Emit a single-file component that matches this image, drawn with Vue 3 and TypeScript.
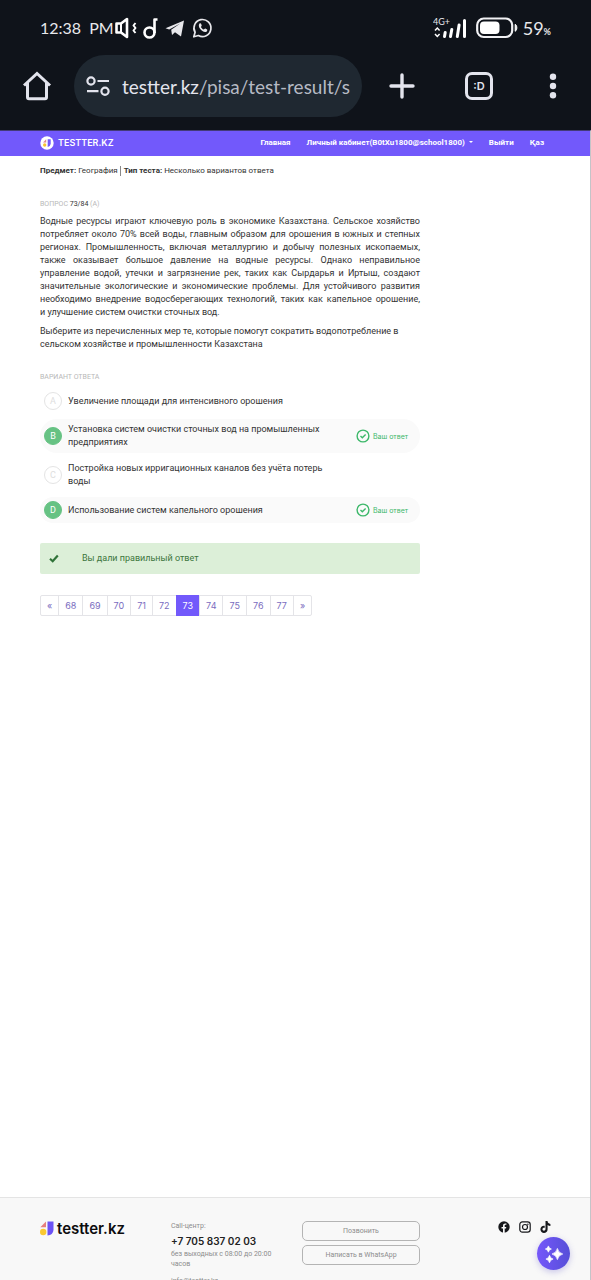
<script setup lang="ts">
interface Answer {
  letter: string
  text: string
  chosen: boolean
}

const answers: Answer[] = [
  { letter: 'A', text: 'Увеличение площади для интенсивного орошения', chosen: false },
  { letter: 'B', text: 'Установка систем очистки сточных вод на промышленных предприятиях', chosen: true },
  { letter: 'C', text: 'Постройка новых ирригационных каналов без учёта потерь воды', chosen: false },
  { letter: 'D', text: 'Использование систем капельного орошения', chosen: true },
]

const pages: string[] = ['«', '68', '69', '70', '71', '72', '73', '74', '75', '76', '77', '»']
const currentPage = '73'
</script>

<template>
  <div class="screen">
    <div class="status">
      <span class="clock"><span>12:38</span><span>PM</span></span>
      <svg class="status-icons" width="99" height="24" viewBox="0 0 99 24" aria-hidden="true">
        <g fill="none" stroke="#fff" stroke-width="2.6" stroke-linejoin="round">
          <path d="M2.500 7.500h4.500l6-4.500v18l-6-4.500h-4.500z" />
          <path d="M7 7v10" stroke-width="2" />
          <path d="M21.500 7l-2 2.500 2 2.500-2 2.500 2 2.500" stroke-width="2" />
          <circle cx="35.500" cy="16.500" r="5" />
          <path d="M40.500 17V3.500h3" />
        </g>
        <path d="M51.500 12.200 70 4.500l-3 16-6-4.300-3 2.800-.8-5.200 9-6.300-11 6z" fill="#e8e8ec" />
        <path d="M79.800 20.800l1.300-4.500a8.500 8.500 0 1 1 3.300 3.200z" fill="none" stroke="#e8e8ec" stroke-width="1.700" stroke-linejoin="round" />
        <path d="M85.500 7.500c.8-.6 1.500-.2 1.700.5l.5 1.400c.1.600-.7 1-.8 1.500.6 1.200 1.600 2.100 2.900 2.600.5-.1.900-1.200 1.500-1l1.800.9c.5.400 0 2-.8 2.400-3.600 1.400-9.500-5-6.800-8.300z" fill="#e8e8ec" />
      </svg>
      <span class="spacer"></span>
      <svg class="signal" width="35" height="24" viewBox="0 0 35 24" aria-label="4G+">
        <text x="0" y="9" class="signal-text">4G+</text>
        <path d="M2 14.500 4.300 12l2.300 2.500M2 18l2.300 2.500L6.600 18" fill="none" stroke="#fff" stroke-width="1.500" />
        <path d="M11.500 20.500l.7-4M17.500 20.500l1.300-7M24.300 20.500l1.800-11.500M31.500 20.500V4.500" fill="none" stroke="#fff" stroke-width="3" stroke-linecap="round" />
      </svg>
      <svg class="battery" width="42" height="22" viewBox="0 0 42 22" aria-hidden="true">
        <rect x="1.200" y="1.500" width="35" height="18.500" rx="6.500" fill="none" stroke="#f1f1f4" stroke-width="2.200" />
        <rect x="4" y="4.500" width="19.500" height="12.500" rx="4" fill="#fff" />
        <path d="M39.200 7.300c2.200 1.300 2.200 5.700 0 7z" fill="#fff" stroke="#fff" />
      </svg>
      <span class="percent">59<small>%</small></span>
    </div>

    <div class="toolbar">
      <button class="tool" type="button" aria-label="Home">
        <svg width="30" height="30" viewBox="0 0 30 30"><path d="M2 14.500 15 2.500l13 12M5.500 12v14.300q0 1.500 1.500 1.500h16q1.500 0 1.500-1.500V12" fill="none" stroke="#e3e4ed" stroke-width="3" stroke-linejoin="miter" /></svg>
      </button>
      <button class="address" type="button">
        <svg width="24" height="20" viewBox="0 0 24 20" aria-hidden="true">
          <g fill="none" stroke="#e3e4ed" stroke-width="2.200">
            <circle cx="5" cy="5" r="3.600" /><path d="M11.500 5H23M1 15.200h11.500" /><circle cx="19" cy="15.200" r="3.600" />
          </g>
        </svg>
        <span class="url"><b>testter.kz</b>/pisa/test-result/s</span>
      </button>
      <button class="tool plus" type="button" aria-label="New tab">
        <svg width="26" height="26" viewBox="0 0 26 26"><path d="M13 2v22M2 13h22" stroke="#e3e4ed" stroke-width="3.400" stroke-linecap="round" /></svg>
      </button>
      <button class="tabs" type="button">:D</button>
      <button class="tool" type="button" aria-label="Menu">
        <svg width="8" height="26" viewBox="0 0 8 26" fill="#e3e4ed"><circle cx="4" cy="3.800" r="3.200" /><circle cx="4" cy="13" r="3.200" /><circle cx="4" cy="22.200" r="3.200" /></svg>
      </button>
    </div>

    <div class="site">
      <header class="navbar">
        <a class="brand" href="#">
          <svg width="14" height="14" viewBox="0 0 14 14" aria-hidden="true">
            <circle cx="7" cy="7" r="6.700" fill="#fff" />
            <path d="M3 6.500 6.200 3.300v3.200z" fill="#e0868a" /><circle cx="4.700" cy="9" r="1.700" fill="#f5c431" /><path d="M7.700 3.300h3v4.500q-.2 2.500-3 3.200z" fill="#7259fb" />
          </svg>
          TESTTER.KZ
        </a>
        <nav class="links">
          <a href="#">Главная</a>
          <a href="#">Личный кабинет(B0tXu1800@school1800) <i class="caret"></i></a>
          <a href="#">Выйти</a>
          <a href="#">Қаз</a>
        </nav>
      </header>

      <main class="content">
        <p class="subject"><b>Предмет:</b> География <i class="bar"></i> <b>Тип теста:</b> Несколько вариантов ответа</p>
        <div class="columns">
          <section class="question">
            <h1 class="label">Вопрос <span>73/84</span> (A)</h1>
            <p class="passage">Водные ресурсы играют ключевую роль в экономике Казахстана. Сельское хозяйство потребляет около 70% всей воды, главным образом для орошения в южных и степных регионах. Промышленность, включая металлургию и добычу полезных ископаемых, также оказывает большое давление на водные ресурсы. Однако неправильное управление водой, утечки и загрязнение рек, таких как Сырдарья и Иртыш, создают значительные экологические и экономические проблемы. Для устойчивого развития необходимо внедрение водосберегающих технологий, таких как капельное орошение, и&nbsp;улучшение систем очистки сточных вод.</p>
            <p class="task">Выберите из перечисленных мер те, которые помогут сократить водопотребление в сельском хозяйстве и промышленности Казахстана</p>
            <h2 class="label second">Вариант ответа</h2>
            <ul class="answers">
              <li v-for="a in answers" :key="a.letter" class="answer" :class="{ chosen: a.chosen }">
                <span class="letter">{{ a.letter }}</span>
                <span class="answer-text">{{ a.text }}</span>
                <span v-if="a.chosen" class="mark">
                  <svg width="14" height="14" viewBox="0 0 14 14" aria-hidden="true"><g fill="none" stroke="#3db86a"><circle cx="7" cy="7" r="5.900" stroke-width="1.400" /><path d="M4.500 7.100 6.300 8.800 9.600 5.500" stroke-width="1.400" /></g></svg>
                  Ваш ответ
                </span>
              </li>
            </ul>
            <div class="alert">
              <svg width="10" height="9" viewBox="0 0 10 9" aria-hidden="true"><path d="M1 4.800 3.700 7.200 8.800 1.600" fill="none" stroke="#2f7238" stroke-width="2.200" /></svg>
              Вы дали правильный ответ
            </div>
            <nav class="pager">
              <a v-for="p in pages" :key="p" href="#" :class="{ active: p === currentPage }">{{ p }}</a>
            </nav>
          </section>
        </div>
      </main>

      <footer class="footer">
        <a class="footer-brand" href="#">
          <svg width="14" height="15" viewBox="0 0 14 15" aria-hidden="true">
            <path d="M.3 6.200 6 .500v5.700z" fill="#e5807f" /><circle cx="3.200" cy="11" r="3.200" fill="#fac832" /><path d="M7.500.500h6V9q-.5 5-6 5.500z" fill="#6c52f5" />
          </svg>
          testter.kz
        </a>
        <div class="contacts">
          <p>Call-центр:</p>
          <a class="phone" href="tel:+77058370203">+7 705 837 02 03</a>
          <p>без выходных с 08:00 до 20:00 часов</p>
          <a class="mail" href="mailto:info@testter.kz">info@testter.kz</a>
        </div>
        <div class="actions">
          <button type="button">Позвонить</button>
          <button type="button">Написать в WhatsApp</button>
        </div>
        <div class="social">
          <a href="#" aria-label="Facebook"><svg width="12" height="12" viewBox="0 0 12 12"><circle cx="6" cy="6" r="5.700" fill="#17181c" /><path d="M5 12V7.600H3.500V6H5V4.800C5 3.200 5.900 2.400 7.300 2.400h1.100v1.400h-.8c-.7 0-.9.4-.9 1V6h1.600l-.3 1.600H6.700V12z" fill="#f8f8f8" /></svg></a>
          <a href="#" aria-label="Instagram"><svg width="12" height="12" viewBox="0 0 12 12"><g fill="none" stroke="#17181c" stroke-width="1.200"><rect x=".8" y=".8" width="10.400" height="10.400" rx="2.600" /><circle cx="6" cy="6" r="2.500" /></g><circle cx="8.900" cy="3.200" r=".7" fill="#17181c" /></svg></a>
          <a href="#" aria-label="TikTok"><svg width="11" height="12" viewBox="0 0 11 12"><path d="M5.500 0h2c.2 1.700 1.200 2.700 2.900 2.900v2c-1.100 0-2-.3-2.800-.9v4.200c0 5-7.200 4.900-7.200.1 0-2.300 1.900-3.900 4.300-3.500v2.100c-1.200-.3-2.200.3-2.200 1.400 0 2 3 1.900 3-.2z" fill="#17181c" /></svg></a>
        </div>
      </footer>
      <button class="assistant" type="button" aria-label="Assistant">
        <svg width="18" height="18" viewBox="0 0 16 16" fill="#fff"><path d="M11 3q.9 4 4.800 5-3.900 1-4.800 5-.9-4-4.800-5Q10.100 7 11 3zM3 .8q.5 2.300 2.700 2.800Q3.500 4.100 3 6.400 2.500 4.100.3 3.600 2.500 3.100 3 .8zM4 9.200q.6 2.700 3.200 3.300Q4.600 13.100 4 15.800q-.6-2.700-3.200-3.300Q3.400 11.900 4 9.200z" stroke="#fff" stroke-width=".6" /></svg>
      </button>
    </div>
  </div>
</template>

<style>
body {
  margin: 0;
}
</style>

<style scoped>
* {
  box-sizing: border-box;
}
p,
h1,
h2,
ul {
  margin: 0;
  padding: 0;
}
a {
  color: inherit;
  text-decoration: none;
}
svg {
  display: block;
  flex: none;
}
button {
  font: inherit;
  padding: 0;
  border: 0;
  background: none;
}
.screen {
  display: flex;
  flex-direction: column;
  height: 100vh;
  overflow: hidden;
  background: #0f131a;
  font-family: Roboto, "Noto Sans", sans-serif;
}
.status {
  display: flex;
  align-items: center;
  height: 55px;
  padding: 0 40px;
  color: #e8e8ec;
  font-family: Lato, sans-serif;
  font-size: 18px;
}
.clock {
  display: flex;
  gap: 8px;
  font-size: 16px;
}
.spacer {
  flex: 1;
}
.signal-text {
  fill: #e8e8ec;
  font-size: 9px;
}
.battery {
  margin: 0 5px 0 8px;
}
.percent small {
  font-size: 9px;
  font-weight: 700;
}
.toolbar {
  display: flex;
  align-items: center;
  height: 75px;
  padding: 0 34px 13px 22px;
}
.address {
  display: flex;
  flex: 1;
  align-items: center;
  gap: 12px;
  height: 62px;
  min-width: 0;
  margin: 0 27px 0 22px;
  padding: 0 12px;
  border-radius: 31px;
  background: #1f2831;
}
.url {
  flex: 1;
  overflow: hidden;
  color: #b6bac4;
  font-family: Lato, sans-serif;
  font-size: 19px;
  text-align: left;
  white-space: nowrap;
}
.url b {
  color: #e3e4ed;
  font-weight: 400;
}
.tabs {
  width: 28px;
  height: 28px;
  margin: 0 56px 0 50px;
  border: 3px solid #e3e4ed;
  border-radius: 7px;
  color: #e3e4ed;
  font-family: Inter, sans-serif;
  font-size: 11px;
  font-weight: 600;
}
.site {
  position: relative;
  display: flex;
  flex: 1;
  flex-direction: column;
  min-height: 0;
  border-top: 1px solid #433a78;
  border-right: 1px solid #c4c4c8;
  background: #fff;
}
.navbar {
  display: flex;
  align-items: center;
  justify-content: space-between;
  height: 25px;
  padding: 0 46px 2px 40px;
  background: #7259fb;
  color: #fff;
  font-size: 8px;
  font-weight: 700;
}
.brand {
  display: flex;
  align-items: center;
  gap: 4px;
  font-family: Inter, sans-serif;
  font-size: 9px;
  font-weight: 600;
}
.links {
  display: flex;
  gap: 16px;
}
.caret {
  display: inline-block;
  margin-left: 2px;
  border: 2px solid transparent;
  border-top-color: #fff;
  border-bottom: 0;
  vertical-align: 2px;
}
.content {
  flex: 1;
  min-height: 0;
  padding: 8px 39px 0 40px;
  color: #333;
  font-size: 9px;
  line-height: 13px;
}
.subject {
  font-size: 8px;
}
.subject b {
  font-weight: 700;
}
.bar {
  display: inline-block;
  height: 10px;
  margin-right: 1px;
  border-left: 1px solid #888;
  vertical-align: middle;
}
.columns {
  display: grid;
  grid-template-columns: repeat(4, 1fr);
  gap: 13px;
  margin-top: 21px;
}
.question {
  grid-column: span 3;
}
.label {
  margin-bottom: 4px;
  color: #b8b8b8;
  font-size: 7px;
  font-weight: 400;
  text-transform: uppercase;
}
.label span {
  color: #333;
}
.passage {
  text-align: justify;
}
.task {
  margin-top: 6px;
}
.label.second {
  margin-top: 20px;
}
.answers {
  display: flex;
  flex-direction: column;
  gap: 5px;
  list-style: none;
}
.answer {
  display: flex;
  align-items: center;
  min-height: 26px;
  padding: 4px 12px 4px 4px;
  border-radius: 17px;
}
.answer.chosen {
  background: #fafafa;
}
.letter {
  display: flex;
  align-items: center;
  justify-content: center;
  width: 18px;
  height: 18px;
  margin-right: 6px;
  border: 1px solid #e4e4e4;
  border-radius: 50%;
  color: #dedede;
}
.chosen .letter {
  border-color: #66c283;
  background: #66c283;
  color: #fff;
}
.answer-text {
  width: 264px;
}
.mark {
  display: flex;
  align-items: center;
  gap: 3px;
  margin-left: auto;
  color: #3db86a;
  font-family: Inter, sans-serif;
  font-size: 7px;
}
.alert {
  display: flex;
  align-items: center;
  gap: 23px;
  height: 31px;
  margin-top: 20px;
  padding: 0 9px;
  border-radius: 2px;
  background: #dcefd8;
  color: #3c763d;
}
.pager {
  display: flex;
  width: max-content;
  margin-top: 21px;
  border: 1px solid #e4e4e8;
  border-radius: 2px;
  color: #7a6cc0;
  font-family: Inter, sans-serif;
  font-size: 9px;
  line-height: 19px;
}
.pager a {
  padding: 0 6px;
}
.pager a + a {
  border-left: 1px solid #e4e4e8;
}
.pager a.active {
  margin: -1px 0;
  padding: 1px 6px;
  border-color: #7259fb;
  background: #7259fb;
  color: #fff;
}
.footer {
  display: grid;
  flex: 0 0 83px;
  grid-template-columns: repeat(4, 1fr);
  align-items: start;
  gap: 13px;
  overflow: hidden;
  padding: 23px 39px 0 40px;
  border-top: 1px solid #e4e4e4;
  background: #f8f8f8;
  color: #8c8c8c;
  font-size: 7px;
  line-height: 10px;
}
.footer-brand {
  display: flex;
  align-items: center;
  gap: 3px;
  color: #0c0c0e;
  font-family: Inter, sans-serif;
  font-size: 15px;
  font-weight: 600;
  line-height: 14px;
}
.contacts a {
  display: block;
}
.contacts .phone {
  margin: 4px 0 2px;
  color: #222;
  font-family: Inter, sans-serif;
  font-size: 10px;
  font-weight: 600;
  line-height: 12px;
}
.contacts .mail {
  margin-top: 7px;
}
.actions {
  display: grid;
  gap: 4px;
}
.actions button {
  height: 20px;
  border: 1px solid #b4b4b4;
  border-radius: 5px;
  color: #8c8c8c;
}
.social {
  display: flex;
  justify-content: flex-end;
  gap: 9px;
}
.assistant {
  position: absolute;
  right: 20px;
  bottom: 10px;
  display: flex;
  align-items: center;
  justify-content: center;
  width: 33px;
  height: 33px;
  border-radius: 50%;
  background: linear-gradient(90deg, #7557fa, #564fd8);
  box-shadow: 0 2px 6px rgba(90, 80, 200, 0.3);
}
</style>
